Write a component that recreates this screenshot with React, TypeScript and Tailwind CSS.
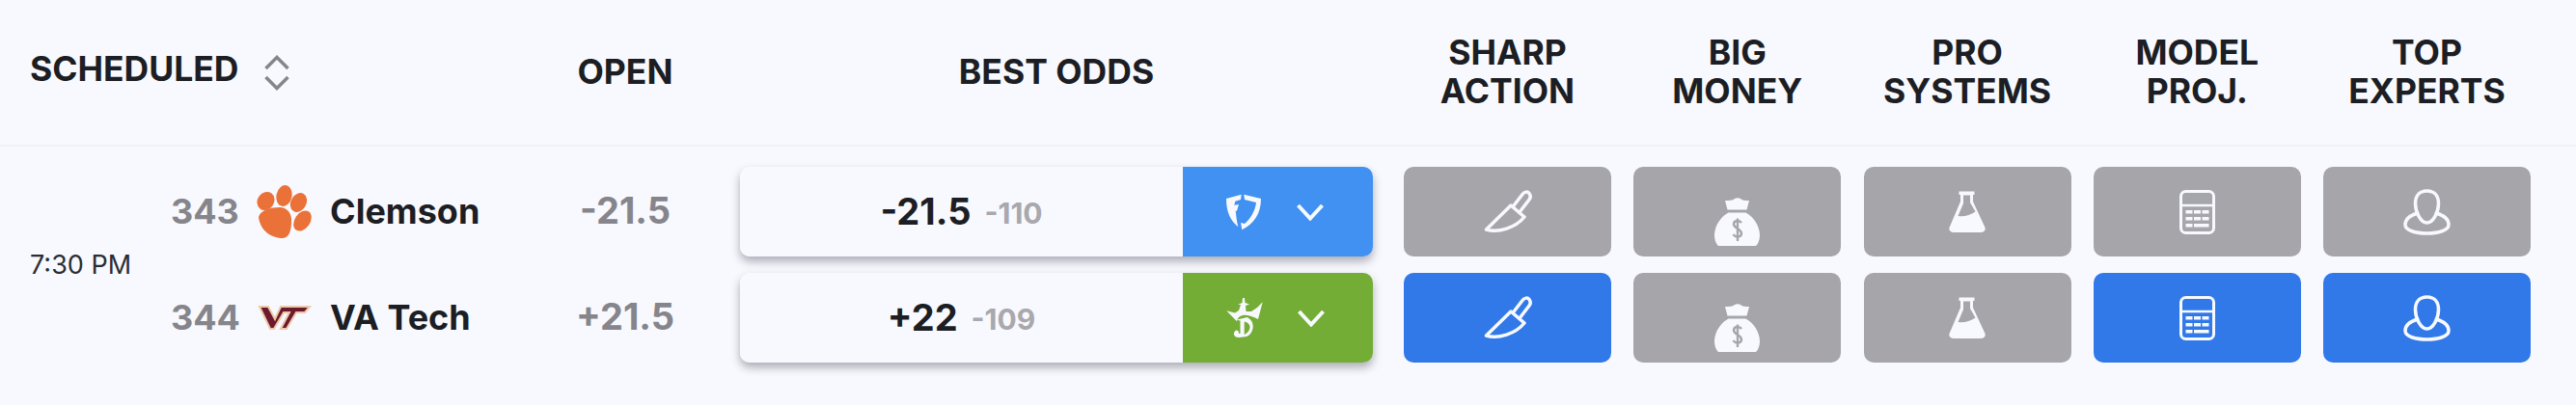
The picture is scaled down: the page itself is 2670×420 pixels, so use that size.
function SortIcon() {
  return (
    <svg width="26" height="37" viewBox="0 0 26 37" fill="none" stroke="#85858b" strokeWidth="3.5">
      <path d="M1.5 14 L13 2.5 L24.5 14" />
      <path d="M1.5 23 L13 34.5 L24.5 23" />
    </svg>
  );
}

function Paw() {
  return (
    <svg width="58" height="55" viewBox="0 0 58 55" fill="#ea7239">
      <path d="M2 33 C4 26 14 23 24 23 C32 23 37 30 36 38 C36 46 34 55 27 55 C17 55 4 49 2 33Z" />
      <ellipse cx="9.5" cy="16.5" rx="8.5" ry="10" transform="rotate(35 9.5 16.5)" />
      <ellipse cx="28.5" cy="11" rx="8" ry="11" transform="rotate(12 28.5 11)" />
      <ellipse cx="43.5" cy="18" rx="8" ry="10.5" transform="rotate(30 43.5 18)" />
      <ellipse cx="47.5" cy="37" rx="8" ry="11.5" transform="rotate(35 47.5 37)" />
    </svg>
  );
}

function VtLogo() {
  return (
    <svg width="58" height="27" viewBox="0 0 58 27" fill="#6e1a2e" stroke="#eccaa9" strokeWidth="2">
      <path d="M3 2 L12 2 L19 15 L25 2 L55 2 L50 8 L41 8 L31 25 L25 25 L34 8 L28 8 L18 25 L14 25Z" />
    </svg>
  );
}

function FanDuel() {
  return (
    <svg width="38" height="38" viewBox="0 0 38 38" fill="#f8f9fe">
      <path d="M1 5 L16.7 0.7 L16 6 L10.3 7.7 L9.3 11.7 L14 11 L12 17.7 L10.7 17.7 L12 28.3 L13.3 34.3 C6 28 1 20 1 5Z" />
      <path d="M19.3 0.7 L37 5 C37 20 30 31 17.3 37.3 L16 30 L20 31 C26 26 31 18 32 9 L20 6Z" />
    </svg>
  );
}

function DraftKings() {
  return (
    <svg width="39" height="42" viewBox="0 0 39 42" fill="#f8f9fe" fillRule="evenodd">
      <path d="M1.3 13.3 L10 15.5 L14 13 L16 7 L13 7 L17.5 5 L18 0 L20 0 L20.5 5 L25 6.5 L21 8 L21.5 14 L27 14 L33 10 L38.7 4.3 L34 22 C28 19 22 17 18 18 C14 19 12 22 12 24.3Z" />
      <path d="M11.3 22.7 L22.7 20 C26.5 22 28.7 25 28.7 29.3 C28.7 35 25 40 20.3 40.3 L14 41 C10 41 8 38 9.3 35.5 C10.5 32.5 14 32.5 14 36.7 L15.5 37 L15.5 23.5Z M19.7 24.5 L19.7 38 C23.5 36.5 25.5 33 25.5 30 C25.5 27.5 23 25 19.7 24.5Z" />
    </svg>
  );
}

function Chevron() {
  return (
    <svg width="28" height="18" viewBox="0 0 28 18" fill="none" stroke="#f8f9fe" strokeWidth="4">
      <path d="M1.5 2 L14 15.5 L26.5 2" />
    </svg>
  );
}

function Knife() {
  return (
    <svg width="50" height="45" viewBox="0 0 50 45" fill="none" stroke="#f8f9fe" strokeWidth="3.5" strokeLinejoin="round">
      <path d="M2.5 41 L28 16 L42 28 C33 39 15 45 2.5 41Z" />
      <path d="M30 17.5 L40 4.5 C42 1.5 45.5 1.5 47 3.5 C48.5 5.5 48.5 8 47 10 L37 23" />
    </svg>
  );
}

function MoneyBag() {
  return (
    <svg className="mt-[20px]" width="47" height="50" viewBox="0 0 47 50">
      <path
        fill="#f8f9fe"
        d="M11 3 C15 3 19 3 21 1 C23 0 25 0 27 1 C29 3 32 3 36 3 L33.5 12.5 L13.5 12.5Z M14.5 15.5 L32.5 15.5 C41 20 47 30 47 39 C47 44 45 48 43 50 L4 50 C2 48 0 44 0 39 C0 30 6 20 14.5 15.5Z"
      />
      <path d="M28 26 C26 23 20 23 20 27.5 C20 32 28 32 28 37 C28 41.5 21.5 41.5 19.5 38 M24 21.5 L24 45" fill="none" stroke="#a6a5aa" strokeWidth="2.4" />
    </svg>
  );
}

function Flask() {
  return (
    <svg width="38" height="43" viewBox="0 0 38 43" fill="#f8f9fe" fillRule="evenodd">
      <path d="M10.5 0.5 L26.5 0.5 L26.5 4 L25 4 L25 11 L37.5 38 C38.5 41 36 43 33 43 L5 43 C2 43 -0.5 41 0.5 38 L12 11 L12 4 L10.5 4Z M15 4.5 L15 13 L9.5 26 C16 27 22 25 27.5 21.5 L22 12 L22 4.5Z" />
    </svg>
  );
}

function Calculator() {
  return (
    <svg width="37" height="46" viewBox="0 0 37 46" fill="none" stroke="#f8f9fe">
      <rect x="1.5" y="1.5" width="34" height="43" rx="5" strokeWidth="3" />
      <path d="M2 16 L35 16" strokeWidth="2.5" />
      <g fill="#f8f9fe" stroke="none">
        <rect x="6.5" y="21" width="7" height="3.5" />
        <rect x="15" y="21" width="7" height="3.5" />
        <rect x="23.5" y="21" width="7" height="3.5" />
        <rect x="6.5" y="28" width="7" height="3.5" />
        <rect x="15" y="28" width="7" height="3.5" />
        <rect x="23.5" y="28" width="7" height="3.5" />
        <rect x="6.5" y="35" width="7" height="3.5" />
        <rect x="15" y="35" width="15.5" height="3.5" />
      </g>
    </svg>
  );
}

function Expert() {
  return (
    <svg width="49" height="48" viewBox="0 0 49 48" fill="none" stroke="#f8f9fe" strokeWidth="3.5" strokeLinejoin="round">
      <path d="M24.5 2 C16 2 12.5 8 12.5 15 C12.5 24 18 35 24.5 35 C31 35 36.5 24 36.5 15 C36.5 8 33 2 24.5 2Z" />
      <path d="M15 25 C8 27 2 31 2 37 C2 43 13 46 24.5 46 C36 46 47 43 47 37 C47 31 41 27 34 25" />
    </svg>
  );
}

const columns = [
  { top: 'SHARP', bottom: 'ACTION' },
  { top: 'BIG', bottom: 'MONEY' },
  { top: 'PRO', bottom: 'SYSTEMS' },
  { top: 'MODEL', bottom: 'PROJ.' },
  { top: 'TOP', bottom: 'EXPERTS' },
];

const teams = [
  { rot: '343', name: 'Clemson', logo: <Paw />, open: '-21.5', line: '-21.5', juice: '-110', bookBg: 'bg-[#4091f2]', book: <FanDuel />, active: [false, false, false, false, false] },
  { rot: '344', name: 'VA Tech', logo: <VtLogo />, open: '+21.5', line: '+22', juice: '-109', bookBg: 'bg-[#74ad36]', book: <DraftKings />, active: [true, false, false, true, true] },
];

const signalIcons = [<Knife />, <MoneyBag />, <Flask />, <Calculator />, <Expert />];

export default function App() {
  return (
    <div className="w-[2670px] h-[420px] bg-[#f8f9fe] font-['Inter',sans-serif] text-[#1c1e24] overflow-hidden">
      <div className="flex items-center h-[152px] pl-[31px] border-b-2 border-[#f0f1f5] text-[35.5px] leading-[40px] font-bold">
        <div className="w-[521px] flex items-center">
          <span className="w-[243px] pb-[6px]">SCHEDULED</span>
          <SortIcon />
        </div>
        <div className="w-[192px] text-center">OPEN</div>
        <div className="w-[656px] ml-[23px] text-center">BEST ODDS</div>
        <div className="w-[1168px] ml-[32px] grid grid-cols-5 gap-x-[23.25px] text-center">
          {columns.map((c) => (
            <div key={c.top}>
              {c.top}
              <br />
              {c.bottom}
            </div>
          ))}
        </div>
      </div>

      <div className="flex pl-[31px] pt-[21px]">
        <div className="w-[146px] self-center pt-[1px] text-[27px] text-[#2b2d33]">7:30 PM</div>

        <div className="w-[375px] flex flex-col gap-[17px]">
          {teams.map((t) => (
            <div key={t.rot} className="h-[93px] flex items-center text-[36px] font-bold">
              <span className="w-[89px] text-[#85858b] pb-[2px]">{t.rot}</span>
              <span className="w-[76px] flex">{t.logo}</span>
              <span className="pb-[2px]">{t.name}</span>
            </div>
          ))}
        </div>

        <div className="w-[192px] flex flex-col gap-[17px]">
          {teams.map((t) => (
            <div key={t.rot} className="h-[93px] flex items-center justify-center pb-[2px] text-[38px] font-bold text-[#85858b]">
              {t.open}
            </div>
          ))}
        </div>

        <div className="w-[656px] ml-[23px] flex flex-col gap-[17px]">
          {teams.map((t) => (
            <div key={t.rot} className="h-[93px] flex rounded-[10px] overflow-hidden shadow-[0_5px_10px_rgba(30,30,50,0.35)]">
              <div className="w-[459px] flex items-center justify-center gap-[14px] bg-[#f8f9fe]">
                <span className="text-[38px] font-bold">{t.line}</span>
                <span className="text-[30px] font-bold text-[#a8a8ad] pt-[4px]">{t.juice}</span>
              </div>
              <div className={`flex-1 flex items-center pl-[44px] gap-[36px] ${t.bookBg}`}>
                {t.book}
                <Chevron />
              </div>
            </div>
          ))}
        </div>

        <div className="w-[1168px] ml-[32px] grid grid-cols-5 gap-x-[23.25px] gap-y-[17px]">
          {teams.map((t) =>
            t.active.map((on, i) => (
              <div
                key={t.rot + i}
                className={`h-[93px] rounded-[10px] flex items-center justify-center ${on ? 'bg-[#3179e9]' : 'bg-[#a6a5aa]'}`}
              >
                {signalIcons[i]}
              </div>
            )),
          )}
        </div>
      </div>
    </div>
  );
}
